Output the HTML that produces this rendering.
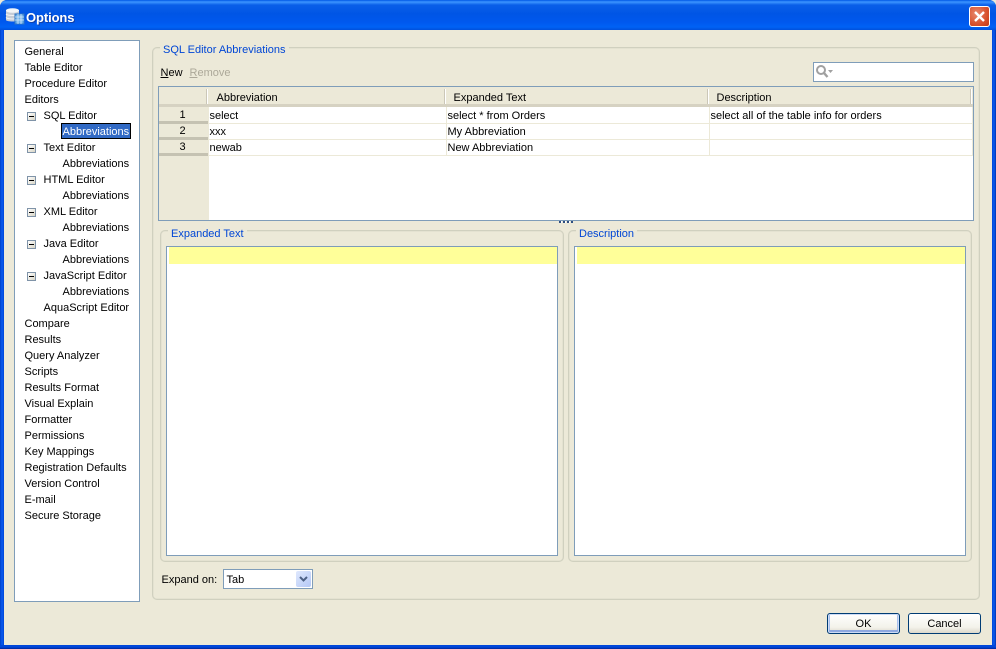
<!DOCTYPE html>
<html><head><meta charset="utf-8">
<style>
html,body{margin:0;padding:0;width:996px;height:649px;overflow:hidden;background:#ece9d8}
*{box-sizing:border-box}
body{position:relative;font:11px/13px "Liberation Sans",sans-serif;color:#000}
.a,.t{position:absolute}
.t{white-space:nowrap;margin-top:2px;margin-left:-.5px}
.tb{position:absolute;background:#fff;border:1px solid #7f9db9}
.g{position:absolute;border:1px solid #d0d0bf;border-radius:5px;box-shadow:inset 0 0 0 .5px #dcdaca}
.leg{position:absolute;white-space:nowrap;background:#ece9d8;color:#0046d5;padding:0 3px;height:13px;margin-top:2px}
.rh{position:absolute;left:159px;width:49px;padding-right:2px;background:#ece9d8;border-bottom:3px solid #c5c2b2;text-align:center}
.hl{position:absolute;height:1px;background:#ece9d8;left:208px;width:765px}
.vl{position:absolute;width:1px;background:#ece9d8;top:107px;height:49px}
.hs{position:absolute;width:2px;top:89px;height:15px;background:#cbc7b8;border-right:1px solid #fff}
.m{position:absolute;left:27px;margin-top:1px;width:9px;height:9px;border:1px solid #7f93a8;background:linear-gradient(135deg,#fff,#d8d5c6)}
.m:after{content:"";position:absolute;left:1px;top:3px;width:5px;height:1px;background:#000}
.btn{position:absolute;top:613px;width:73px;height:21px;border:1px solid #003c74;border-radius:3px;background:linear-gradient(#fff,#f3f2ea 70%,#dcd8cb);text-align:center;line-height:19px}
</style></head><body>

<div class="a" style="left:0;top:0;width:996px;height:649px;background:#0046d5;border-radius:7px 7px 0 0;overflow:hidden">
  <div class="a" style="left:0;top:0;width:996px;height:30px;background:linear-gradient(#0058e6 0,#3d95ff 2px,#0a5fe8 5px,#0055e5 14px,#0058ee 22px,#0062f5 27px,#0050dc 30px)"></div>
  <div class="a" style="left:0;top:30px;width:4px;height:619px;background:linear-gradient(90deg,#0040c8,#0a5cf0 50%,#0046d8)"></div>
  <div class="a" style="right:0;top:30px;width:4px;height:619px;background:linear-gradient(90deg,#0046d8,#0a5cf0 50%,#0034b0)"></div>
  <div class="a" style="left:0;bottom:0;width:996px;height:4px;background:linear-gradient(#0046d8,#0048dc 50%,#00259a)"></div>
</div>
<div class="a" style="left:4px;top:30px;width:988px;height:615px;background:#ece9d8"></div>

<svg class="a" style="left:5px;top:7px" width="20" height="18" viewBox="0 0 20 18">
  <path d="M1 3.5C1 1.5 14 1.5 14 3.5V13C14 15 1 15 1 13Z" fill="#c5ccd6"/>
  <ellipse cx="7.5" cy="3.5" rx="6.5" ry="2.3" fill="#f2f5f8"/>
  <path d="M1 7C3 9 12 9 14 7M1 10.500C3 12.500 12 12.500 14 10.500" stroke="#eef1f5" fill="none"/>
  <rect x="10" y="7" width="9" height="10" fill="#6fb0e8" stroke="#2e74c4"/>
  <path d="M10 10H19M10 13H19M13 7V17M16 7V17" stroke="#d4e8fa" stroke-width=".8"/>
</svg>
<div class="t" style="left:26px;top:8px;margin-left:0;font:bold 13px/16px 'Liberation Sans',sans-serif;color:#fff;letter-spacing:-.1px;text-shadow:1px 1px 0 #0f3fa8">Options</div>

<div class="a" style="left:969px;top:6px;width:21px;height:21px;border:1px solid #fff;border-radius:3px;background:radial-gradient(circle at 35% 35%,#e88a70,#d8522e 60%,#c23a14)">
<svg class="a" style="left:0;top:0" width="19" height="19" viewBox="0 0 19 19"><path d="M5 5L14 14M14 5L5 14" stroke="#fff" stroke-width="2.400"/></svg>
</div>

<!-- Tree -->
<div class="tb" style="left:14px;top:40px;width:126px;height:562px"></div>
<div class="a" style="left:61px;top:123px;width:70px;height:16px;background:#316ac5;border:1px solid #000"></div>
<div class="t" style="left:25px;top:44px">General</div>
<div class="t" style="left:25px;top:60px">Table Editor</div>
<div class="t" style="left:25px;top:76px">Procedure Editor</div>
<div class="t" style="left:25px;top:92px">Editors</div>
<div class="m" style="top:111px"></div><div class="t" style="left:44px;top:108px">SQL Editor</div>
<div class="t" style="left:63px;top:124px;color:#fff">Abbreviations</div>
<div class="m" style="top:143px"></div><div class="t" style="left:44px;top:140px">Text Editor</div>
<div class="t" style="left:63px;top:156px">Abbreviations</div>
<div class="m" style="top:175px"></div><div class="t" style="left:44px;top:172px">HTML Editor</div>
<div class="t" style="left:63px;top:188px">Abbreviations</div>
<div class="m" style="top:207px"></div><div class="t" style="left:44px;top:204px">XML Editor</div>
<div class="t" style="left:63px;top:220px">Abbreviations</div>
<div class="m" style="top:239px"></div><div class="t" style="left:44px;top:236px">Java Editor</div>
<div class="t" style="left:63px;top:252px">Abbreviations</div>
<div class="m" style="top:271px"></div><div class="t" style="left:44px;top:268px">JavaScript Editor</div>
<div class="t" style="left:63px;top:284px">Abbreviations</div>
<div class="t" style="left:44px;top:300px">AquaScript Editor</div>
<div class="t" style="left:25px;top:316px">Compare</div>
<div class="t" style="left:25px;top:332px">Results</div>
<div class="t" style="left:25px;top:348px">Query Analyzer</div>
<div class="t" style="left:25px;top:364px">Scripts</div>
<div class="t" style="left:25px;top:380px">Results Format</div>
<div class="t" style="left:25px;top:396px">Visual Explain</div>
<div class="t" style="left:25px;top:412px">Formatter</div>
<div class="t" style="left:25px;top:428px">Permissions</div>
<div class="t" style="left:25px;top:444px">Key Mappings</div>
<div class="t" style="left:25px;top:460px">Registration Defaults</div>
<div class="t" style="left:25px;top:476px">Version Control</div>
<div class="t" style="left:25px;top:492px">E-mail</div>
<div class="t" style="left:25px;top:508px">Secure Storage</div>

<!-- Main group -->
<div class="g" style="left:152px;top:47px;width:828px;height:553px"></div>
<div class="leg" style="left:160px;top:42px">SQL Editor Abbreviations</div>
<div class="t" style="left:161px;top:65px"><u>N</u>ew</div>
<div class="t" style="left:190px;top:65px;color:#aca899"><u>R</u>emove</div>

<!-- Search -->
<div class="tb" style="left:813px;top:62px;width:161px;height:20px"></div>
<svg class="a" style="left:815px;top:64px" width="20" height="16" viewBox="0 0 20 16">
  <circle cx="6" cy="6" r="4" fill="none" stroke="#a0a0a0" stroke-width="2"/>
  <path d="M9 9L12.500 13" stroke="#a0a0a0" stroke-width="2.400"/>
  <path d="M13 6H18L15.500 9Z" fill="#a0a0a0"/>
</svg>

<!-- Table -->
<div class="a" style="left:158px;top:86px;width:816px;height:135px;background:#fff;border:1px solid #7f9db9"></div>
<div class="a" style="left:159px;top:87px;width:814px;height:20px;background:#ece9d8;border-bottom:3px solid #d6d2c2"></div>
<div class="a" style="left:159px;top:107px;width:50px;height:113px;background:#ece9d8"></div>
<div class="hs" style="left:206px"></div>
<div class="hs" style="left:444px"></div>
<div class="hs" style="left:707px"></div>
<div class="hs" style="left:970px"></div>
<div class="t" style="left:217px;top:90px">Abbreviation</div>
<div class="t" style="left:454px;top:90px">Expanded Text</div>
<div class="t" style="left:717px;top:90px">Description</div>
<div class="rh" style="top:107px;height:17px;padding-top:2px">1</div>
<div class="rh" style="top:124px;height:16px;padding-top:1px">2</div>
<div class="rh" style="top:140px;height:16px;padding-top:1px">3</div>
<div class="hl" style="top:123px"></div>
<div class="hl" style="top:139px"></div>
<div class="hl" style="top:155px"></div>
<div class="vl" style="left:208px"></div>
<div class="vl" style="left:446px"></div>
<div class="vl" style="left:709px"></div>
<div class="vl" style="left:972px"></div>
<div class="t" style="left:210px;top:108px">select</div>
<div class="t" style="left:210px;top:124px">xxx</div>
<div class="t" style="left:210px;top:140px">newab</div>
<div class="t" style="left:448px;top:108px">select * from Orders</div>
<div class="t" style="left:448px;top:124px">My Abbreviation</div>
<div class="t" style="left:448px;top:140px">New Abbreviation</div>
<div class="t" style="left:711px;top:108px">select all of the table info for orders</div>

<!-- Splitter -->
<div class="a" style="left:559px;top:221px;width:14px;height:2px;background:repeating-linear-gradient(90deg,#2f4f80 0,#2f4f80 2px,#fff 2px,#fff 3px,#ece9d8 3px,#ece9d8 4px)"></div>

<!-- Expanded -->
<div class="g" style="left:160px;top:230px;width:404px;height:332px"></div>
<div class="leg" style="left:168px;top:226px">Expanded Text</div>
<div class="tb" style="left:166px;top:246px;width:392px;height:310px"></div>
<div class="a" style="left:169px;top:247px;width:388px;height:17px;background:#ffff99"></div>

<!-- Description -->
<div class="g" style="left:568px;top:230px;width:404px;height:332px"></div>
<div class="leg" style="left:576px;top:226px">Description</div>
<div class="tb" style="left:574px;top:246px;width:392px;height:310px"></div>
<div class="a" style="left:577px;top:247px;width:388px;height:17px;background:#ffff99"></div>

<!-- Combo -->
<div class="t" style="left:162px;top:572px">Expand on:</div>
<div class="tb" style="left:223px;top:569px;width:90px;height:20px"></div>
<div class="t" style="left:227px;top:572px">Tab</div>
<div class="a" style="left:296px;top:571px;width:15px;height:16px;border-radius:2px;background:linear-gradient(135deg,#dfe8fd,#b4c8f6)">
<svg class="a" style="left:0;top:0" width="15" height="16" viewBox="0 0 15 16"><path d="M4 6L7.500 9.500L11 6" fill="none" stroke="#4d6185" stroke-width="2"/></svg>
</div>

<!-- Buttons -->
<div class="btn" style="left:827px;line-height:20px;box-shadow:inset 0 0 0 1px #cedcf6,inset 0 -2px 0 1px #8ea8e0,inset 2px 0 0 0 #a8c0ee,inset -2px 0 0 0 #a8c0ee">OK</div>
<div class="btn" style="left:908px;line-height:20px">Cancel</div>

</body></html>
